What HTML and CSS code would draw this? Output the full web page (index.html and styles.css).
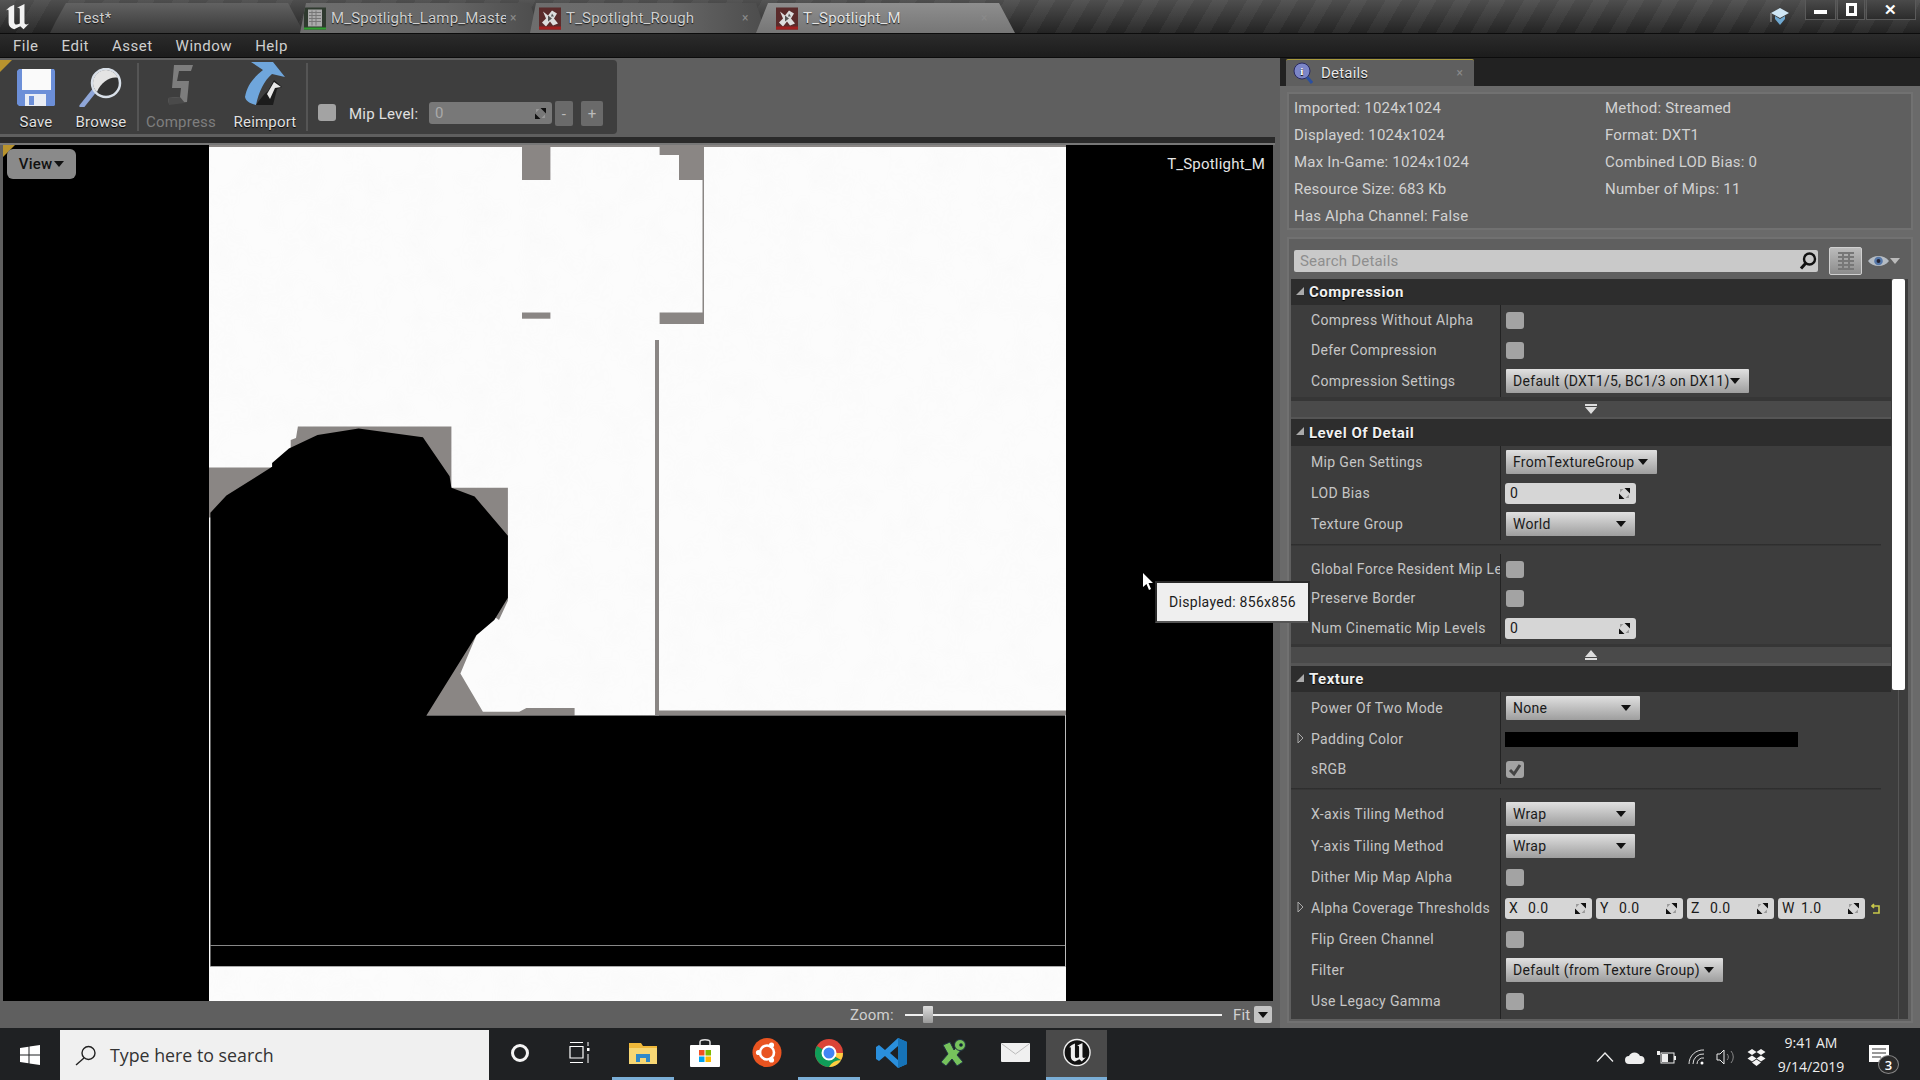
FILE: index.html
```html
<!DOCTYPE html>
<html lang="en">
<head>
<meta charset="utf-8">
<title>T_Spotlight_M</title>
<link rel="stylesheet" href="styles.css">
</head>
<body>
<svg class="defs" width="0" height="0">
  <symbol id="ue" viewBox="0 0 30 30"><path d="M3 8 C6 5 9 3 12 2 V20 C12 23 14 24 18 22 V7 C18 5 17 5 15 5 L23 1 V21 C23 23 25 24 28 22 L22 28 L18.500 25 L12 28 C8 27 6 25 6 21 V9 C6 7 5 7 3 8Z"/></symbol>
  <symbol id="checker" viewBox="0 0 22 22"><rect width="22" height="22" fill="#5a2b2b"/><path d="M4 4 L9 8 L13 3 L18 6 L15 11 L19 16 L14 18 L11 14 L7 19 L3 15 L7 11 Z" fill="#ddd"/><path d="M9 8 L13 11 L9 14 Z M13 6 L15 9 L12 9 Z" fill="#555"/><rect y="19" width="22" height="3" fill="#a01f1f"/></symbol>
  <symbol id="spin" viewBox="0 0 10 10"><path d="M5 0H10V5Z M0 10V5L5 10Z" fill="#111"/><path d="M4 1 1 1 1 4Z M6 9 9 9 9 6Z" fill="#999"/></symbol>
  <symbol id="tri" viewBox="0 0 10 6"><path d="M0 0H10L5 6Z"/></symbol>
  <filter id="mottle" x="0" y="0" width="100%" height="100%"><feTurbulence type="fractalNoise" baseFrequency="0.035" numOctaves="3" seed="4"/><feColorMatrix values="0 0 0 0 .55  0 0 0 0 .55  0 0 0 0 .55  0 0 0 .55 -.2"/></filter>
</svg>

<header class="titlebar">
  <svg class="ue-logo"><use href="#ue"/></svg>
  <div class="tabs">
    <div class="tab tab-home"><span class="tab-text">Test*</span></div>
    <div class="tab tab-m">
      <svg class="tab-icon" viewBox="0 0 22 22"><rect width="22" height="22" fill="#2f3a2f"/><rect x="4" y="2" width="14" height="17" fill="#aaa"/><path d="M5 5H17M5 8H17M5 11H17M5 14H17M8 3V18M12 3V18" stroke="#777"/><rect y="20" width="22" height="2" fill="#2ea02e"/></svg>
      <span class="tab-text tab-clip">M_Spotlight_Lamp_Master</span><span class="tab-x">×</span>
    </div>
    <div class="tab tab-r">
      <svg class="tab-icon"><use href="#checker"/></svg>
      <span class="tab-text tab-clip">T_Spotlight_Rough</span><span class="tab-x">×</span>
    </div>
    <div class="tab tab-a">
      <svg class="tab-icon"><use href="#checker"/></svg>
      <span class="tab-text tab-clip">T_Spotlight_M</span><span class="tab-x">×</span>
    </div>
  </div>
  <svg class="hat" viewBox="0 0 20 18"><path d="M1 5 10 0 19 5 10 10Z" fill="#cfe6f5"/><path d="M5 8 10 11 15 8 V11 L10 17 5 11Z" fill="#6fa8d0"/><path d="M1 5V14" stroke="#888" stroke-width="1.4"/></svg>
  <div class="winctl">
    <span class="wb wb-min"><i class="i-min"></i></span>
    <span class="wb wb-max"><i class="i-max"></i></span>
    <span class="wb wb-close">✕</span>
  </div>
</header>

<nav class="menubar"><span>File</span><span>Edit</span><span>Asset</span><span>Window</span><span>Help</span></nav>

<main class="main">
  <section class="left">
    <div class="toolbar-wrap">
      <div class="toolbar">
        <span class="corner"></span>
        <div class="tool tool-save">
          <svg class="ti" width="40" height="39" viewBox="0 0 40 39"><path d="M1 3 3 1H38L39 3V37L38 38H3L1 36Z" fill="#6c8fd8"/><rect x="6" y="1" width="29" height="21" fill="#fafafa"/><rect x="9" y="26" width="21" height="12" fill="#e9edf5"/><rect x="13" y="28" width="5" height="9" fill="#6c8fd8"/></svg>
          <span>Save</span>
        </div>
        <div class="tool tool-browse">
          <svg class="ti" width="48" height="39" viewBox="0 0 48 39"><path d="M5 38 17 23" stroke="#8fa6d8" stroke-width="5" stroke-linecap="round"/><circle cx="29" cy="15" r="14" fill="#333" stroke="#d8dfe8" stroke-width="2.5"/><path d="M16 15A13 13 0 0 1 41 10C34 8 24 14 20 24 17 21 16 18 16 15Z" fill="#e4e4e4"/></svg>
          <span>Browse</span>
        </div>
        <i class="sep"></i>
        <div class="tool tool-compress dim">
          <svg class="ti" width="32" height="43" viewBox="0 0 32 43"><path d="M9 1H28L26 7H14L12 17H24L22 38 4 40 3 34 15 33 16 24H7Z" fill="#7d7d7d"/><path d="M3 34 15 33 20 39 4 41Z" fill="#4a4a4a"/></svg>
          <span>Compress</span>
        </div>
        <div class="tool tool-reimport">
          <svg class="ti" width="42" height="46" viewBox="0 0 42 46"><path d="M7 1H29L41 16 28 13C20 20 15 30 12 44 5 42 2 40 1 36 3 24 10 16 19 9Z" fill="#6fa6dc"/><path d="M24 30 30 19 38 26 33 28 29 44H12C16 38 20 33 24 30Z" fill="#1c1c1c"/><path d="M23 33 30 21 37 26 31 27 26 38Z" fill="#e8e8e8"/></svg>
          <span>Reimport</span>
        </div>
        <i class="sep sep2"></i>
        <span class="chk chk-mip"></span>
        <span class="mip-label">Mip Level:</span>
        <span class="mip-input">0<svg class="spin"><use href="#spin"/></svg></span>
        <span class="mip-btn mip-minus">-</span>
        <span class="mip-btn">+</span>
      </div>
    </div>
    <div class="strip"></div>
    <div class="viewport">
      <svg class="texture" width="857" height="856" viewBox="0 0 857 856">
        <rect width="857" height="856" fill="#fcfcfc"/>
        <rect width="857" height="856" filter="url(#mottle)" class="mottle"/>
        <g fill="#8a8684">
          <rect width="857" height="2"/>
          <rect x="313" width="28.4" height="35"/>
          <path d="M450.6 0H495V179H450.6V167.5H493.5V35H470V10H450.6Z"/>
          <rect x="313" y="167.5" width="28.4" height="6.2"/>
          <rect x="446" y="195" width="4" height="375"/>
          <rect x="450" y="565.5" width="407" height="5"/>
          <rect x="0" y="322.5" width="66" height="50"/>
          <path d="M88.9 281.6H242.4V342.8H298.9V455.7L290 475 240 440 100 330 81.7 303V295L87 293Z"/>
          <path d="M267.4 490.2 251.4 528.4 273.9 566.7H310.3L317.4 562.9H365.6V570.5H200Z"/>
        </g>
        <path d="M1.4 367.7 17.4 350.5 63.1 321.8V318L79.9 303.4 108.5 290 149.6 283.5 213.9 292.3 240.6 331.3 242.4 342.8 265.6 351.6 298.9 390.7V452.7L285.3 474.9 267.4 490.2 217.4 570.5H856V821H1.4Z" fill="#000"/>
        <rect x="1" y="800" width="855" height="1" fill="#888"/>
        <rect x="1" y="821" width="855" height="1" fill="#aaa"/>
        <rect x="856" y="570" width="1" height="252" fill="#bbb"/>
      </svg>
      <span class="corner"></span>
      <div class="view-btn">View<svg class="tri"><use href="#tri"/></svg></div>
      <span class="tex-name">T_Spotlight_M</span>
    </div>
    <div class="zoombar">
      <span class="zoom-label">Zoom:</span>
      <div class="slider"><i class="thumb"></i></div>
      <span class="fit">Fit</span>
      <span class="fit-box"><svg class="tri"><use href="#tri"/></svg></span>
    </div>
  </section>

  <section class="right">
    <div class="tabstrip">
      <div class="dtab">
        <svg class="dtab-ic" viewBox="0 0 20 22"><circle cx="9" cy="9" r="8" fill="#7c86c8" stroke="#2a2a60"/><text x="9" y="13" font-size="11" font-weight="700" text-anchor="middle" fill="#fff" font-family="Liberation Serif">i</text><path d="M14 15 19 21" stroke="#2b4fa0" stroke-width="3"/></svg>
        <span>Details</span><span class="tab-x dtab-x">×</span>
      </div>
    </div>
    <div class="panel">
      <div class="info">
        <span>Imported: 1024x1024</span><span>Method: Streamed</span>
        <span>Displayed: 1024x1024</span><span>Format: DXT1</span>
        <span>Max In-Game: 1024x1024</span><span>Combined LOD Bias: 0</span>
        <span>Resource Size: 683 Kb</span><span>Number of Mips: 11</span>
        <span>Has Alpha Channel: False</span>
      </div>
      <div class="props">
        <div class="searchrow">
          <div class="search"><span>Search Details</span>
            <svg class="s-ic" viewBox="0 0 18 18"><circle cx="10.5" cy="7" r="5.5" fill="none" stroke="#111" stroke-width="2.4"/><path d="M6.5 11.5 2 16.5" stroke="#111" stroke-width="3"/></svg>
          </div>
          <div class="gridbtn"><svg width="18" height="20" viewBox="0 0 18 20"><path d="M1 2H17M1 6H17M1 10H17M1 14H17M1 18H17M6 1V19M12 1V19" stroke="#777" stroke-width="2"/></svg></div>
          <svg class="eye" viewBox="0 0 22 14"><path d="M0 7C5 0 17 0 22 7 17 14 5 14 0 7Z" fill="#b5bcc4"/><circle cx="11" cy="7" r="4.5" fill="#5577a8"/><circle cx="11" cy="7" r="2" fill="#223"/></svg>
          <svg class="tri eye-tri"><use href="#tri"/></svg>
        </div>
        <div class="body">
          <div class="list">
            <div class="cat"><svg class="cat-tri" viewBox="0 0 8 8"><path d="M8 0V8H0Z"/></svg>Compression</div>
            <div class="row r30"><div class="lab"><i class="slot"></i>Compress Without Alpha</div><div class="val"><span class="chk"></span></div></div>
            <div class="row r30"><div class="lab"><i class="slot"></i>Defer Compression</div><div class="val"><span class="chk"></span></div></div>
            <div class="row r32"><div class="lab"><i class="slot"></i>Compression Settings</div><div class="val"><span class="dd w243"><b>Default (DXT1/5, BC1/3 on DX11)</b><svg class="tri"><use href="#tri"/></svg></span></div></div>
            <div class="pad4"></div>
            <div class="more"><svg width="12" height="10" viewBox="0 0 12 10"><path d="M0 0H12V2H0ZM0 3H12L6 10Z" fill="#ddd"/></svg></div>
            <div class="catgap"></div>

            <div class="cat cat27"><svg class="cat-tri" viewBox="0 0 8 8"><path d="M8 0V8H0Z"/></svg>Level Of Detail</div>
            <div class="row r32"><div class="lab"><i class="slot"></i>Mip Gen Settings</div><div class="val"><span class="dd w151"><b>FromTextureGroup</b><svg class="tri"><use href="#tri"/></svg></span></div></div>
            <div class="row r30"><div class="lab"><i class="slot"></i>LOD Bias</div><div class="val"><span class="num w131">0<svg class="spin"><use href="#spin"/></svg></span></div></div>
            <div class="row r32"><div class="lab"><i class="slot"></i>Texture Group</div><div class="val"><span class="dd w129"><b>World</b><svg class="tri"><use href="#tri"/></svg></span></div></div>
            <div class="divider"></div>
            <div class="row r30"><div class="lab"><i class="slot"></i>Global Force Resident Mip Levels</div><div class="val"><span class="chk"></span></div></div>
            <div class="row r28"><div class="lab"><i class="slot"></i>Preserve Border</div><div class="val"><span class="chk"></span></div></div>
            <div class="row r32"><div class="lab"><i class="slot"></i>Num Cinematic Mip Levels</div><div class="val"><span class="num w131">0<svg class="spin"><use href="#spin"/></svg></span></div></div>
            <div class="pad3"></div>
            <div class="more"><svg width="12" height="10" viewBox="0 0 12 10"><path d="M0 10H12V8H0ZM0 7H12L6 0Z" fill="#ddd"/></svg></div>
            <div class="catgap gap3"></div>

            <div class="cat"><svg class="cat-tri" viewBox="0 0 8 8"><path d="M8 0V8H0Z"/></svg>Texture</div>
            <div class="row r32"><div class="lab"><i class="slot"></i>Power Of Two Mode</div><div class="val"><span class="dd w134"><b>None</b><svg class="tri"><use href="#tri"/></svg></span></div></div>
            <div class="row r30"><div class="lab"><i class="slot"><svg class="exp" viewBox="0 0 7 12"><path d="M1 1 6 6 1 11Z" fill="none" stroke="#aaa"/></svg></i>Padding Color</div><div class="val"><span class="swatch"></span></div></div>
            <div class="row r30"><div class="lab"><i class="slot"></i>sRGB</div><div class="val"><span class="chk"><svg viewBox="0 0 18 17"><path d="M4 9 8 13 14 4" fill="none" stroke="#444" stroke-width="3"/></svg></span></div></div>
            <div class="divider d14"></div>
            <div class="row r32"><div class="lab"><i class="slot"></i>X-axis Tiling Method</div><div class="val"><span class="dd w129"><b>Wrap</b><svg class="tri"><use href="#tri"/></svg></span></div></div>
            <div class="row r32"><div class="lab"><i class="slot"></i>Y-axis Tiling Method</div><div class="val"><span class="dd w129"><b>Wrap</b><svg class="tri"><use href="#tri"/></svg></span></div></div>
            <div class="row r30"><div class="lab"><i class="slot"></i>Dither Mip Map Alpha</div><div class="val"><span class="chk"></span></div></div>
            <div class="row r32"><div class="lab"><i class="slot"><svg class="exp" viewBox="0 0 7 12"><path d="M1 1 6 6 1 11Z" fill="none" stroke="#aaa"/></svg></i>Alpha Coverage Thresholds</div>
              <div class="val vec">
                <span class="num vn"><em>X</em>0.0<svg class="spin"><use href="#spin"/></svg></span>
                <span class="num vn"><em>Y</em>0.0<svg class="spin"><use href="#spin"/></svg></span>
                <span class="num vn"><em>Z</em>0.0<svg class="spin"><use href="#spin"/></svg></span>
                <span class="num vn"><em>W</em>1.0<svg class="spin"><use href="#spin"/></svg></span>
                <svg class="reset" viewBox="0 0 9 11"><path d="M3 1 1 3 3 5M1 3H8V10H2" fill="none" stroke="#c8c84a" stroke-width="1.6"/></svg>
              </div></div>
            <div class="row r30"><div class="lab"><i class="slot"></i>Flip Green Channel</div><div class="val"><span class="chk"></span></div></div>
            <div class="row r32"><div class="lab"><i class="slot"></i>Filter</div><div class="val"><span class="dd w217"><b>Default (from Texture Group)</b><svg class="tri"><use href="#tri"/></svg></span></div></div>
            <div class="row r30"><div class="lab"><i class="slot"></i>Use Legacy Gamma</div><div class="val"><span class="chk"></span></div></div>
            <div class="row r3"><div class="lab"></div><div class="val"></div></div>
          </div>
          <div class="scroll"><i class="thumbv"></i><i class="trackv"></i></div>
        </div>
      </div>
    </div>
  </section>
</main>

<footer class="taskbar">
  <svg class="start" width="20" height="20" viewBox="0 0 20 20"><path d="M0 3 8.5 1.8V9.4H0ZM9.5 1.6 20 0V9.4H9.5ZM0 10.4H8.5V18.2L0 17ZM9.5 10.4H20V20L9.5 18.4Z" fill="#fff"/></svg>
  <div class="tsearch">
    <svg width="22" height="21" viewBox="0 0 22 21"><circle cx="13.5" cy="8" r="6.5" fill="none" stroke="#222" stroke-width="1.4"/><path d="M9 13 1 20" stroke="#222" stroke-width="1.4"/></svg>
    <span>Type here to search</span>
  </div>
  <div class="apps">
    <span class="app a-cortana"><i class="ring"></i></span>
    <span class="app a-view"><svg width="21" height="21" viewBox="0 0 21 21"><path d="M1 .5H14M1 20.5H14M1 4.500H14V16H1Z" fill="none" stroke="#fff" stroke-width="1.2"/><rect x="18" y="6" width="2.500" height="3" fill="#fff"/><path d="M19 0V4M19 12V21" stroke="#fff"/></svg></span>
    <span class="app a-on"><svg width="28" height="24" viewBox="0 0 28 24"><path d="M0 2H12L14 5H28V22H0Z" fill="#f0b93a"/><path d="M0 7H28V23H0Z" fill="#f7d774"/><path d="M7 21V13H21V21H17V17H11V21Z" fill="#2f89c9"/></svg></span>
    <span class="app"><svg width="30" height="29" viewBox="0 0 30 29"><path d="M10 8V4C10 1 20 1 20 4V8" fill="none" stroke="#ddd" stroke-width="1.500"/><rect y="7" width="30" height="22" rx="1" fill="#fff"/><rect x="9" y="12" width="5.500" height="5.500" fill="#f25022"/><rect x="15.500" y="12" width="5.500" height="5.500" fill="#7fba00"/><rect x="9" y="18.500" width="5.500" height="5.500" fill="#00a4ef"/><rect x="15.500" y="18.500" width="5.500" height="5.500" fill="#ffb900"/></svg></span>
    <span class="app"><svg width="30" height="29" viewBox="0 0 30 29"><circle cx="15" cy="14.500" r="14.500" fill="#e95420"/><circle cx="15" cy="14.500" r="7" fill="none" stroke="#fff" stroke-width="2.600"/><circle cx="6.500" cy="14.500" r="2.600" fill="#fff"/><circle cx="19.500" cy="7" r="2.600" fill="#fff"/><circle cx="19.500" cy="22" r="2.600" fill="#fff"/></svg></span>
    <span class="app a-on"><svg width="28" height="28" viewBox="0 0 28 28"><circle cx="14" cy="14" r="14" fill="#db4437"/><path d="M14 14 26.100 21A14 14 0 0 1 7 26.100 14 14 0 0 1 1.900 7Z" fill="#0f9d58"/><path d="M14 14H28A14 14 0 0 1 14 28 14 14 0 0 1 26.100 21Z" fill="#ffcd40"/><circle cx="14" cy="14" r="6.500" fill="#4285f4" stroke="#fff" stroke-width="2"/></svg></span>
    <span class="app"><svg width="31" height="30" viewBox="0 0 31 30"><path d="M22 0 31 4V26L22 30 9 18 3 23 0 21V9L3 7 9 12ZM22 8 14 15 22 22Z" fill="#2a8fdc"/><path d="M22 0 31 4V26L22 30Z" fill="#1673b8"/></svg></span>
    <span class="app"><svg width="27" height="28" viewBox="0 0 27 28"><path d="M3 6 10 3 14 11 20 4 22 10 17 16 23 23 17 27 12 20 6 27 1 23 8 15Z" fill="#76c25c" stroke="#234" stroke-width="1"/><circle cx="20" cy="6" r="5.500" fill="#76c25c" stroke="#234"/><circle cx="21" cy="6" r="1.800" fill="#123"/></svg></span>
    <span class="app"><svg width="29" height="19" viewBox="0 0 29 19"><rect width="29" height="19" rx="1" fill="#f0f0f0"/><path d="M1 1 14.500 11 28 1" fill="none" stroke="#bbb"/></svg></span>
    <span class="app a-ue"><svg class="ue-c" width="28" height="29" viewBox="0 0 30 30"><circle cx="15" cy="15" r="14" fill="#111" stroke="#eee" stroke-width="1.500"/><use href="#ue" x="4" y="4" width="22" height="22" class="ue-fill"/></svg></span>
  </div>
  <div class="tray">
    <svg width="18" height="10" viewBox="0 0 18 10"><path d="M1 9.500 9 1 17 9.500" fill="none" stroke="#eee" stroke-width="1.300"/></svg>
    <svg width="20" height="13" viewBox="0 0 20 13"><path d="M4 13A4 4 0 0 1 4 5 6 6 0 0 1 15 5 4 4 0 0 1 16 13Z" fill="#eee"/></svg>
    <svg width="20" height="15" viewBox="0 0 20 15"><rect x="5" y="3" width="13" height="10" fill="none" stroke="#eee"/><rect x="6" y="4" width="6" height="8" fill="#eee"/><rect x="18" y="6" width="2" height="4" fill="#eee"/><path d="M1 1 4 1 4 5 1 5Z" fill="#eee"/></svg>
    <svg width="17" height="16" viewBox="0 0 17 16"><path d="M1 15A14 14 0 0 1 16 1M5 15A10 10 0 0 1 16 5M9 15A6 6 0 0 1 16 9" fill="none" stroke="#ddd"/><circle cx="14" cy="14" r="1.500" fill="#fff"/></svg>
    <svg width="20" height="16" viewBox="0 0 20 16"><path d="M1 5H4L8 1V15L4 11H1Z" fill="none" stroke="#eee"/><path d="M11 5A4 4 0 0 1 11 11M15 2A9 9 0 0 1 15 14" fill="none" stroke="#888"/></svg>
    <svg width="19" height="17" viewBox="0 0 19 17"><path d="M5 0 9.500 3 5 6 .5 3ZM14 0 18.500 3 14 6 9.500 3ZM5 6.500 9.500 9.500 5 12.500 .5 9.500ZM14 6.500 18.500 9.500 14 12.500 9.500 9.500ZM5 13.500 9.500 10.500 14 13.500 9.500 17Z" fill="#f4f4f4"/></svg>
  </div>
  <div class="clock"><span>9:41 AM</span><span>9/14/2019</span></div>
  <div class="notif">
    <svg width="20" height="17" viewBox="0 0 20 17"><rect width="20" height="17" fill="#fff"/><path d="M3 4H17M3 8H17M3 12H12" stroke="#333"/></svg>
    <span class="badge">3</span>
  </div>
</footer>

<div class="tooltip">Displayed: 856x856</div>
<svg class="cursor" width="10" height="17" viewBox="0 0 10 17"><path d="M0 0 10 10H5.500L8 16 6 17 3.500 11 0 14Z" fill="#fff"/></svg>
</body>
</html>
```
FILE: styles.css
```css
* { box-sizing: border-box; }
html, body { margin: 0; padding: 0; }
body {
  width: 1920px; height: 1080px; overflow: hidden; position: relative;
  background: #5f5f5f; color: #d0d0d0;
  font-family: Roboto, "Noto Sans", sans-serif; font-size: 15px; letter-spacing: .2px;
}
.defs { position: absolute; }
svg { display: block; flex: none; }

/* title bar */
.titlebar {
  height: 34px; display: flex; align-items: flex-start; position: relative;
  border-bottom: 1px solid #0c0c0c;
  background:
    repeating-linear-gradient(120deg, rgba(255,255,255,.04) 0 14px, rgba(255,255,255,0) 14px 30px),
    linear-gradient(#4e4e4e, #232323);
}
.ue-logo { width: 28px; height: 28px; margin: 3px 0 0 3px; fill: #f2f2f2; }
.tabs { display: flex; margin: 3px 0 0 19px; height: 30px; }
.tab {
  height: 30px; display: flex; align-items: center; color: #cfcfcf; position: relative; flex: none;
  text-shadow: 0 1px 1px #111;
}
.tab-home {
  width: 254px; padding-left: 25px;
  background: linear-gradient(#626262, #383838);
  clip-path: polygon(0 100%, 6px 60%, 16px 0, 238px 0, 254px 100%);
  margin-right: -4px;
}
.tab-m, .tab-r {
  background: linear-gradient(90deg, #6e6e6e, #666 60%, #4c4c4c);
  clip-path: polygon(0 100%, 6px 0, calc(100% - 10px) 0, 100% 100%);
}
.tab-m { width: 240px; padding-left: 4px; margin-right: -10px; }
.tab-r { width: 236px; padding-left: 9px; margin-right: -10px; }
.tab-a {
  width: 259px; padding-left: 20px;
  background: linear-gradient(#8e8e8e, #767676);
  clip-path: polygon(0 100%, 12px 0, 243px 0, 259px 100%);
  color: #e4e4e4;
}
.tab-icon { width: 22px; height: 23px; margin-right: 5px; }
.tab-text { white-space: nowrap; }
.tab-clip { overflow: hidden; }
.tab-m .tab-clip { width: 175px; }
.tab-r .tab-clip { width: 172px; }
.tab-a .tab-clip { width: 174px; }
.tab-x { color: #8a8a8a; font-size: 12px; margin-left: 4px; text-shadow: none; }
.hat { position: absolute; left: 1770px; top: 8px; width: 20px; height: 18px; }
.winctl { position: absolute; left: 1805px; top: 0; display: flex; gap: 1px; }
.wb {
  height: 20px; display: flex; align-items: center; justify-content: center;
  border: 1px solid #5a5a5a; border-top: 0; color: #fff; font-size: 15px; font-weight: 700;
  background: linear-gradient(#4a4a4a, #2c2c2c);
}
.wb-min { width: 31px; } .wb-max { width: 28px; } .wb-close { width: 50px; }
.i-min { width: 13px; height: 4px; background: #fff; margin-top: 4px; }
.i-max { width: 11px; height: 13px; border: 3px solid #fff; }

/* menu */
.menubar {
  height: 24px; padding-left: 13px; display: flex; gap: 23px; align-items: center; letter-spacing: .5px;
  background: linear-gradient(#2b2b2b, #1c1c1c); border-bottom: 1px solid #0c0c0c; color: #cfcfcf;
}

/* main */
.main { height: 970px; display: flex; }
.left { width: 1275px; flex: none; display: flex; flex-direction: column; background: #5f5f5f; }
.right { flex: 1; display: flex; flex-direction: column; margin-left: 5px; background: #6a6a6a; }

.toolbar-wrap { height: 79px; padding-top: 2px; }
.toolbar {
  width: 617px; height: 74px; background: #3e3e3e; border-radius: 0 4px 4px 0; position: relative;
  display: flex; color: #e0e0e0; align-items: stretch;
}
.corner {
  position: absolute; left: 0; top: 0; width: 0; height: 0;
  border-top: 12px solid #b8932e; border-right: 12px solid transparent;
}
.tool { display: flex; flex-direction: column; align-items: center; justify-content: flex-end; padding-bottom: 3px; text-shadow: 0 1px 1px #000; }
.ti { margin-bottom: 6px; }
.tool-save { width: 65px; padding-left: 7px; }
.tool-browse { width: 72px; }
.tool-compress { width: 84px; }
.tool-reimport { width: 84px; }
.dim { color: #7e7e7e; text-shadow: none; }
.sep { width: 2px; margin: 3px 0; background: #555; flex: none; }
.sep2 { margin-right: 10px; margin-left: -1px; }
.chk { width: 18px; height: 17px; background: #a3a3a3; border-radius: 3px; display: block; flex: none; }
.chk-mip { align-self: flex-start; margin-top: 44px; }
.mip-label { align-self: flex-start; margin: 45px 0 0 13px; width: 80px; }
.mip-input {
  align-self: flex-start; margin-top: 42px; width: 123px; height: 22px; border-radius: 3px;
  background: #787878; color: #aaa; display: flex; align-items: center; justify-content: space-between; padding: 0 6px;
}
.mip-btn {
  align-self: flex-start; margin: 41px 0 0 0; width: 22px; height: 25px; background: #6a6a6a; border-radius: 2px;
  display: flex; align-items: center; justify-content: center; color: #bbb;
}
.mip-minus { width: 18px; margin: 41px 8px 0 3px; }
.spin { width: 11px; height: 11px; }
.strip { height: 8px; background: #2a2a2a; border-bottom: 2px solid #777; }

.viewport { height: 856px; margin: 0 2px 0 3px; background: #000; padding-left: 206px; position: relative; }
.mottle { opacity: .1; }
.view-btn {
  position: absolute; left: 4px; top: 4px; width: 69px; height: 30px; border-radius: 6px;
  background: #8a8a8a; color: #111; display: flex; align-items: center; justify-content: center; gap: 2px;
  font-weight: 500;
}
.tri { width: 10px; height: 6px; fill: #111; }
.tex-name { position: absolute; right: 8px; top: 10px; color: #e6e6e6; }

.zoombar { height: 27px; position: relative; display: flex; align-items: center; color: #d0d0d0; padding-left: 850px; }
.zoom-label { width: 55px; }
.slider { width: 317px; height: 2px; background: #f0f0f0; position: relative; }
.thumb { position: absolute; left: 18px; top: -8px; width: 10px; height: 17px; background: linear-gradient(#ddd, #999); border-radius: 1px; }
.fit { margin-left: 11px; width: 21px; }
.fit-box { width: 18px; height: 17px; background: #c4c4c4; display: flex; align-items: center; justify-content: center; border-radius: 2px; }

/* details */
.tabstrip { height: 28px; background: #222; padding: 1px 0 0 6px; flex: none; }
.dtab {
  width: 188px; height: 27px; padding-left: 7px; display: flex; align-items: center; color: #e8e8e8;
  background: #5f5f5f; border-top: 1px solid #a89a3c; border-radius: 2px 2px 0 0; text-shadow: 0 1px 1px #000; position: relative;
}
.dtab-ic { width: 20px; height: 22px; margin-right: 8px; }
.dtab-x { position: absolute; right: 11px; }
.panel { flex: 1; padding: 6px 7px 5px; display: flex; flex-direction: column; gap: 7px; }
.info {
  height: 138px; background: #5f5f5f; border: 2px solid #717171; padding-left: 5px;
  display: grid; grid-template-columns: 311px 1fr; grid-auto-rows: 27px; align-items: center; color: #d2d2d2;
}
.props { height: 786px; background: #5f5f5f; border: 2px solid #717171; padding: 0 3px 2px 2px; display: flex; flex-direction: column; }
.searchrow { height: 40px; padding: 8px 0 4px 3px; display: flex; align-items: center; flex: none; }
.search {
  width: 524px; height: 22px; border-radius: 2px; background: #c9c9c9; color: #8e8e8e; display: flex; align-items: center;
  justify-content: space-between; padding: 0 1px 0 6px;
}
.s-ic { width: 18px; height: 18px; }
.gridbtn { width: 33px; height: 28px; margin-left: 11px; background: linear-gradient(#bbb, #8c8c8c); border: 1px solid #d0d0d0; border-radius: 2px; display: flex; align-items: center; justify-content: center; }
.eye { width: 21px; height: 14px; margin-left: 6px; }
.eye-tri { margin-left: 1px; fill: #bbb; }
.body { flex: 1; display: flex; min-height: 0; }
.list { width: 600px; flex: none; background: #3d3d3d; color: #c6c6c6; display: flex; flex-direction: column; }
.scroll { flex: 1; background: #3d3d3d; display: flex; flex-direction: column; padding-left: 1px; }
.thumbv { width: 13px; height: 411px; background: #fff; border-radius: 2px; flex: none; }
.trackv { width: 1px; flex: 1; background: #555; margin-left: 6px; }

.cat {
  height: 26px; flex: none; background: #2d2d2d; color: #f0f0f0; font-weight: 700; font-size: 15px; letter-spacing: .5px;
  display: flex; align-items: center; padding-left: 3px; text-shadow: 0 1px 1px #000;
}
.cat27 { height: 27px; }
.cat-tri { width: 8px; height: 8px; margin: 0 5px 3px 2px; fill: #aaa; }
.row { display: flex; flex: none; }
.r3 { height: 3px; } .r28 { height: 28px; } .r30 { height: 30px; } .r32 { height: 32px; }
.lab { width: 209px; padding-left: 5px; display: flex; align-items: center; white-space: nowrap; overflow: hidden; flex: none; font-size: 14px; letter-spacing: .35px; }
.slot { width: 15px; flex: none; display: block; }
.exp { width: 7px; height: 12px; margin: 0 0 3px 1px; }
.val { flex: 1; border-left: 1px solid #232323; display: flex; align-items: center; padding-left: 5px; }
.dd {
  height: 24px; display: flex; align-items: center; justify-content: space-between; padding: 0 9px 0 7px;
  background: linear-gradient(#e0e0e0, #9e9e9e); color: #1a1a1a; border-radius: 1px; font-size: 14px; letter-spacing: .3px;
}
.dd b { font-weight: 400; white-space: nowrap; }
.w243 { width: 243px; } .w151 { width: 151px; } .w129 { width: 129px; } .w134 { width: 134px; } .w217 { width: 217px; } .w131 { width: 131px; }
.num {
  height: 21px; display: flex; align-items: center; justify-content: space-between; padding: 0 6px 0 5px;
  background: #d6d6d6; color: #1a1a1a; border-radius: 3px; margin-left: -1px; font-size: 14px; letter-spacing: .3px;
}
.swatch { width: 293px; height: 15px; background: #000; margin-left: -1px; }
.chk svg { width: 18px; height: 17px; }
.vec { gap: 4px; }
.vn { width: 87px; padding-left: 4px; margin-left: 0; }
.vn:first-child { margin-left: -1px; }
.vn em { font-style: normal; width: 19px; }
.vn svg { margin-left: auto; }
.reset { width: 9px; height: 11px; margin-left: 2px; }
.pad4 { height: 4px; flex: none; background: #363636; }
.pad3 { height: 3px; flex: none; background: #363636; }
.more { height: 16px; flex: none; background: #4a4a4a; display: flex; align-items: center; justify-content: center; }
.catgap { height: 2px; flex: none; background: #555; }
.gap3 { height: 3px; }
.divider { height: 14px; flex: none; position: relative; padding-top: 4px; }
.divider::before { content: ""; display: block; height: 2px; width: 590px; background: linear-gradient(#2b2b2b, #3a3a3a); }
.d14 { height: 14px; }

/* taskbar */
.taskbar { height: 52px; background: #1f2123; display: flex; align-items: flex-start; position: relative; }
.start { margin: 17px 20px 0 20px; }
.tsearch { width: 429px; height: 50px; margin-top: 2px; background: #f0f0f0; color: #333; display: flex; align-items: center; gap: 13px; padding-left: 15px; font-family: "Open Sans", sans-serif; font-size: 17.800px; letter-spacing: 0; }
.apps { display: flex; margin-left: 10px; height: 52px; }
.app { width: 62px; height: 52px; display: flex; align-items: center; justify-content: center; padding-bottom: 2px; border-top: 2px solid transparent; border-bottom: 3px solid transparent; }
.a-cortana { width: 41px; }
.a-view { width: 72px; justify-content: flex-start; padding-left: 29px; }
.a-on { border-bottom-color: #7aaed6; }
.a-ue { background: #4a4a4a; border-bottom-color: #7aaed6; width: 61px; border-top-color: #1f2123; }
.ue-c { fill: #eee; }
.ue-fill { fill: #eee; }
.ring { width: 18px; height: 18px; border-radius: 50%; border: 3px solid #f4f4f4; display: block; }
.tray { position: absolute; left: 1596px; top: 17px; height: 24px; width: 170px; display: flex; align-items: center; justify-content: space-between; }
.clock { position: absolute; left: 1766px; top: 5px; width: 90px; display: flex; flex-direction: column; align-items: center; gap: 5px; color: #eee; font-family: "Open Sans", sans-serif; font-size: 14px; letter-spacing: 0; line-height: 19px; }
.notif { position: absolute; left: 1869px; top: 17px; }
.badge { position: absolute; left: 9px; top: 10px; width: 21px; height: 19px; border-radius: 50%; background: #2a2a2a; border: 1px solid #888; color: #fff; font-size: 13px; letter-spacing: 0; display: flex; align-items: center; justify-content: center; font-family: "Open Sans", sans-serif; font-weight: 600; }

/* overlays */
.tooltip {
  position: absolute; left: 1155px; top: 581px; width: 155px; height: 42px; background: #efefef; color: #1c1c1c;
  border: 2px solid #2a2a2a; border-bottom-color: #555; display: flex; align-items: center; padding-left: 12px; font-size: 14px; letter-spacing: .3px; white-space: nowrap;
}
.cursor { position: absolute; left: 1143px; top: 573px; }
```
